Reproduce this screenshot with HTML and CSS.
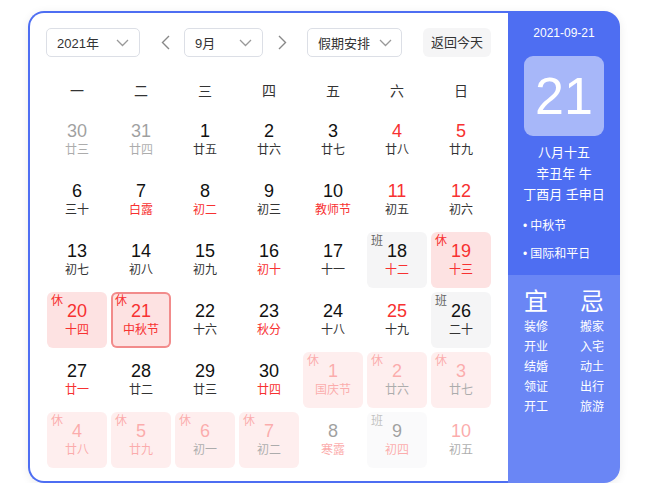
FILE: index.html
```html
<!DOCTYPE html>
<html lang="zh">
<head>
<meta charset="utf-8">
<title>万年历</title>
<link rel="stylesheet" href="styles.css">
</head>
<body>
<div class="card">
  <div class="main">
    <div class="toolbar">
      <div class="select sel-year"><span>2021年</span><svg class="chev" width="13" height="8" viewBox="0 0 13 8"><polyline points="1,1 6.5,6.5 12,1" fill="none" stroke="#999" stroke-width="1.3"/></svg></div>
      <div class="arrow arrow-prev"><svg width="9" height="15" viewBox="0 0 9 15"><polyline points="8,1 1.5,7.5 8,14" fill="none" stroke="#888" stroke-width="1.4"/></svg></div>
      <div class="select sel-month"><span>9月</span><svg class="chev" width="13" height="8" viewBox="0 0 13 8"><polyline points="1,1 6.5,6.5 12,1" fill="none" stroke="#999" stroke-width="1.3"/></svg></div>
      <div class="arrow arrow-next"><svg width="9" height="15" viewBox="0 0 9 15"><polyline points="1,1 7.5,7.5 1,14" fill="none" stroke="#888" stroke-width="1.4"/></svg></div>
      <div class="select sel-holiday"><span>假期安排</span><svg class="chev" width="13" height="8" viewBox="0 0 13 8"><polyline points="1,1 6.5,6.5 12,1" fill="none" stroke="#999" stroke-width="1.3"/></svg></div>
      <div class="today-btn">返回今天</div>
    </div>
    <div class="week">
      <div>一</div><div>二</div><div>三</div><div>四</div><div>五</div><div>六</div><div>日</div>
    </div>
    <div class="grid">
      <div class="cell other"><div class="num">30</div><div class="lun">廿三</div></div>
      <div class="cell other"><div class="num">31</div><div class="lun">廿四</div></div>
      <div class="cell"><div class="num">1</div><div class="lun">廿五</div></div>
      <div class="cell"><div class="num">2</div><div class="lun">廿六</div></div>
      <div class="cell"><div class="num">3</div><div class="lun">廿七</div></div>
      <div class="cell"><div class="num red">4</div><div class="lun">廿八</div></div>
      <div class="cell"><div class="num red">5</div><div class="lun">廿九</div></div>

      <div class="cell"><div class="num">6</div><div class="lun">三十</div></div>
      <div class="cell"><div class="num">7</div><div class="lun red">白露</div></div>
      <div class="cell"><div class="num">8</div><div class="lun red">初二</div></div>
      <div class="cell"><div class="num">9</div><div class="lun">初三</div></div>
      <div class="cell"><div class="num">10</div><div class="lun red">教师节</div></div>
      <div class="cell"><div class="num red">11</div><div class="lun">初五</div></div>
      <div class="cell"><div class="num red">12</div><div class="lun">初六</div></div>

      <div class="cell"><div class="num">13</div><div class="lun">初七</div></div>
      <div class="cell"><div class="num">14</div><div class="lun">初八</div></div>
      <div class="cell"><div class="num">15</div><div class="lun">初九</div></div>
      <div class="cell"><div class="num">16</div><div class="lun red">初十</div></div>
      <div class="cell"><div class="num">17</div><div class="lun">十一</div></div>
      <div class="cell work"><span class="tag">班</span><div class="num">18</div><div class="lun red">十二</div></div>
      <div class="cell rest"><span class="tag">休</span><div class="num red">19</div><div class="lun red">十三</div></div>

      <div class="cell rest"><span class="tag">休</span><div class="num red">20</div><div class="lun red">十四</div></div>
      <div class="cell rest today"><span class="tag">休</span><div class="num red">21</div><div class="lun red">中秋节</div></div>
      <div class="cell"><div class="num">22</div><div class="lun">十六</div></div>
      <div class="cell"><div class="num">23</div><div class="lun red">秋分</div></div>
      <div class="cell"><div class="num">24</div><div class="lun">十八</div></div>
      <div class="cell"><div class="num red">25</div><div class="lun">十九</div></div>
      <div class="cell work"><span class="tag">班</span><div class="num">26</div><div class="lun">二十</div></div>

      <div class="cell"><div class="num">27</div><div class="lun red">廿一</div></div>
      <div class="cell"><div class="num">28</div><div class="lun">廿二</div></div>
      <div class="cell"><div class="num">29</div><div class="lun">廿三</div></div>
      <div class="cell"><div class="num">30</div><div class="lun red">廿四</div></div>
      <div class="cell rest other"><span class="tag">休</span><div class="num red">1</div><div class="lun red">国庆节</div></div>
      <div class="cell rest other"><span class="tag">休</span><div class="num red">2</div><div class="lun">廿六</div></div>
      <div class="cell rest other"><span class="tag">休</span><div class="num red">3</div><div class="lun">廿七</div></div>

      <div class="cell rest other"><span class="tag">休</span><div class="num red">4</div><div class="lun red">廿八</div></div>
      <div class="cell rest other"><span class="tag">休</span><div class="num red">5</div><div class="lun red">廿九</div></div>
      <div class="cell rest other"><span class="tag">休</span><div class="num red">6</div><div class="lun">初一</div></div>
      <div class="cell rest other"><span class="tag">休</span><div class="num red">7</div><div class="lun">初二</div></div>
      <div class="cell other"><div class="num">8</div><div class="lun red">寒露</div></div>
      <div class="cell work other"><span class="tag">班</span><div class="num">9</div><div class="lun red">初四</div></div>
      <div class="cell other"><div class="num red">10</div><div class="lun">初五</div></div>
    </div>
  </div>
  <div class="side">
    <div class="side-top">
      <div class="date">2021-09-21</div>
      <div class="bigday">21</div>
      <div class="lunar-info">
        <div>八月十五</div>
        <div>辛丑年 牛</div>
        <div>丁酉月 壬申日</div>
      </div>
      <ul class="fest">
        <li>中秋节</li>
        <li>国际和平日</li>
      </ul>
    </div>
    <div class="side-bottom">
      <div class="col">
        <div class="yj">宜</div>
        <div>装修</div><div>开业</div><div>结婚</div><div>领证</div><div>开工</div>
      </div>
      <div class="col">
        <div class="yj">忌</div>
        <div>搬家</div><div>入宅</div><div>动土</div><div>出行</div><div>旅游</div>
      </div>
    </div>
  </div>
</div>
</body>
</html>
```

FILE: styles.css
```css
* { box-sizing: border-box; }
html, body { margin: 0; padding: 0; background: #fff; }
body {
  font-family: "Liberation Sans", Arial, "Noto Sans CJK SC", sans-serif;
  color: #222;
}
.card {
  display: flex;
  width: 592px;
  height: 472px;
  margin: 11px 0 0 28px;
  border-radius: 16px;
  box-shadow: 0 2px 10px rgba(0, 0, 0, 0.08);
}
.main {
  width: 480px;
  height: 472px;
  border: 2px solid #4e6ef2;
  border-right: none;
  border-radius: 16px 0 0 16px;
  padding: 15px 0 0 16px;
  background: #fff;
}
.toolbar {
  display: flex;
  align-items: center;
  height: 29px;
}
.select {
  display: flex;
  align-items: center;
  justify-content: space-between;
  height: 29px;
  border: 1px solid #dcdfe6;
  border-radius: 5px;
  padding: 0 10px 0 10px;
  font-size: 13px;
  color: #333;
  background: #fff;
}
.sel-year { width: 94px; }
.sel-month { width: 79px; }
.sel-holiday { width: 95px; padding-right: 9px; }
.chev { display: block; }
.arrow {
  width: 24px;
  height: 29px;
  display: flex;
  align-items: center;
  justify-content: center;
}
.arrow-prev { margin: 0 7px 0 13px; }
.arrow-next { margin: 0 13px 0 7px; }
.today-btn {
  margin-left: 21px;
  width: 68px;
  height: 29px;
  line-height: 29px;
  text-align: center;
  font-size: 13px;
  color: #333;
  background: #f5f5f6;
  border-radius: 6px;
}
.week {
  display: grid;
  grid-template-columns: repeat(7, 60px);
  column-gap: 4px;
  margin: 14px 0 0 1px;
  height: 41px;
  line-height: 41px;
  text-align: center;
  font-size: 14px;
  color: #333;
}
.grid {
  display: grid;
  grid-template-columns: repeat(7, 60px);
  grid-auto-rows: 56px;
  gap: 4px;
  margin-left: 1px;
}
.cell {
  position: relative;
  border-radius: 6px;
  padding-top: 9px;
  text-align: center;
}
.num {
  font-size: 18px;
  line-height: 20px;
  color: #111;
}
.lun {
  margin-top: 1px;
  font-size: 12px;
  line-height: 16px;
  color: #333;
}
.red { color: #f73131; }
.rest { background: #fde2e2; }
.work { background: #f5f5f6; }
.today { box-shadow: inset 0 0 0 2px #f28b8b; }
.tag {
  position: absolute;
  left: 4px;
  top: 2px;
  font-size: 12px;
  line-height: 14px;
}
.rest .tag { color: #f73131; }
.work .tag { color: #666; }
.other { opacity: 0.4; }
.rest.other { background: #fdd6d6; }
.side {
  width: 112px;
  height: 472px;
  border-radius: 0 16px 16px 0;
  overflow: hidden;
  color: #fff;
  display: flex;
  flex-direction: column;
}
.side-top {
  height: 264px;
  background: #4e6ef2;
  padding-top: 14px;
}
.date {
  text-align: center;
  font-size: 12px;
  line-height: 16px;
}
.bigday {
  width: 80px;
  height: 80px;
  margin: 15px auto 0;
  border-radius: 9px;
  background: rgba(255, 255, 255, 0.5);
  text-align: center;
  line-height: 80px;
  font-size: 52px;
}
.lunar-info {
  margin-top: 6px;
  text-align: center;
  font-size: 13px;
  line-height: 21px;
}
.fest {
  list-style: none;
  margin: 7px 0 0;
  padding: 0 0 0 15px;
  font-size: 12px;
  line-height: 28px;
}
.fest li::before {
  content: "•";
  margin-right: 3px;
}
.side-bottom {
  flex: 1;
  background: #6a86f5;
  display: flex;
  padding-top: 13px;
}
.col {
  width: 56px;
  text-align: center;
  font-size: 12px;
  line-height: 20px;
}
.yj {
  font-size: 24px;
  line-height: 28px;
  margin-bottom: 1px;
}
```
